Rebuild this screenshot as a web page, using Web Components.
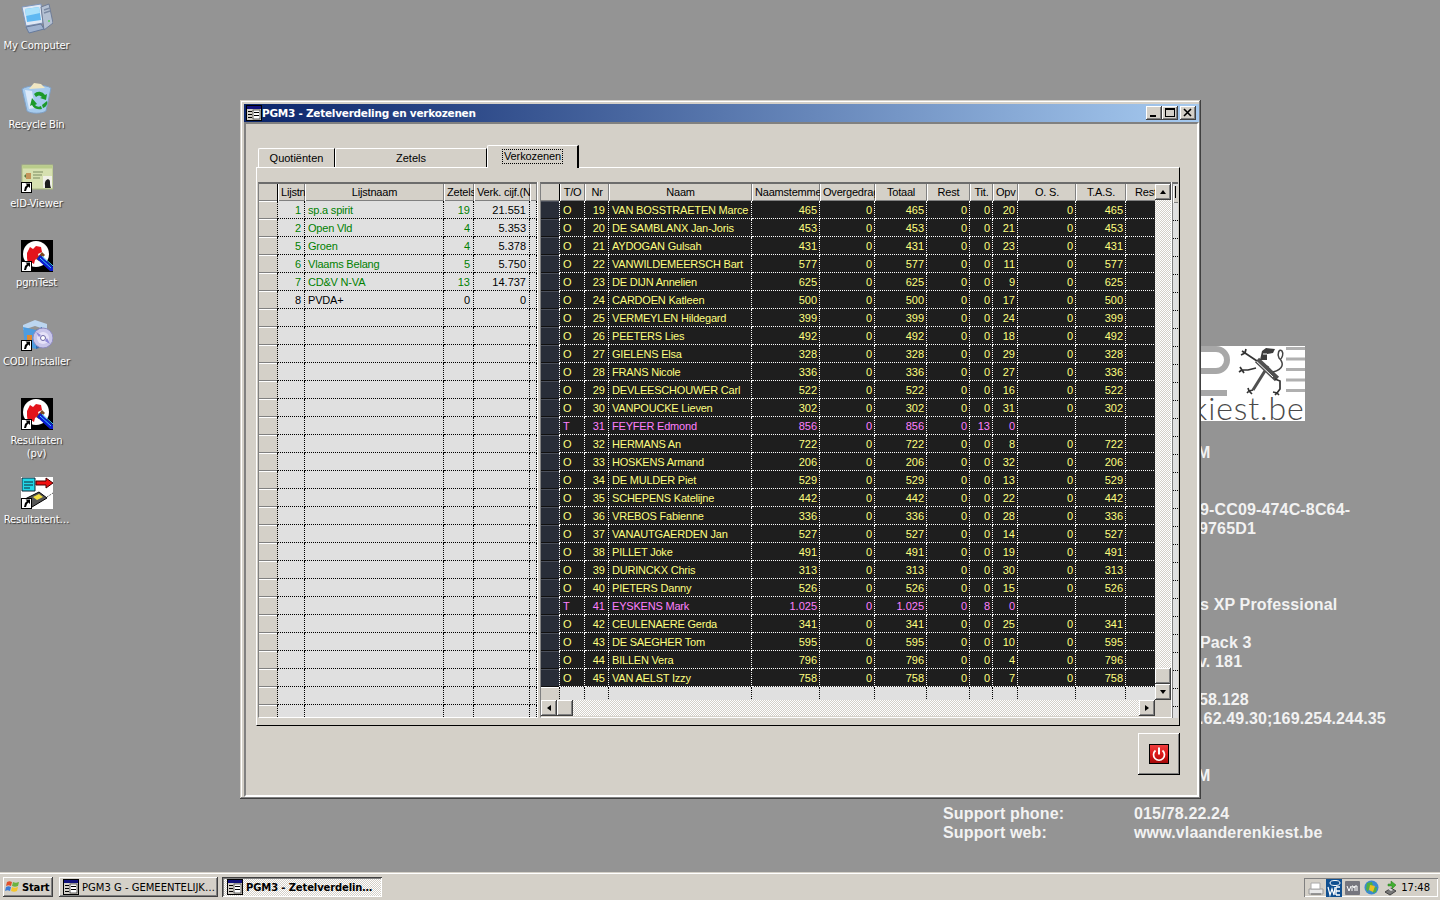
<!DOCTYPE html>
<html lang="nl"><head><meta charset="utf-8"><title>PGM3</title>
<style>
html,body{margin:0;padding:0;height:100%;overflow:hidden;background:#949494}
</style></head><body>
<win-desktop>
  <desk-icon label="My Computer" icon="computer"></desk-icon>
  <desk-icon label="Recycle Bin" icon="bin"></desk-icon>
  <desk-icon label="eID-Viewer" icon="eid" shortcut></desk-icon>
  <desk-icon label="pgmTest" icon="pgm" shortcut></desk-icon>
  <desk-icon label="CODI Installer" icon="cd" shortcut></desk-icon>
  <desk-icon label="Resultaten (pv)" icon="pgm" shortcut></desk-icon>
  <desk-icon label="Resultatent…" icon="tool" shortcut></desk-icon>
  <info-panel slot="info"></info-panel>
  <app-window slot="window" title="PGM3 - Zetelverdeling en verkozenen"></app-window>
  <task-bar slot="bar"></task-bar>
</win-desktop>
<script>
const ICONS={
computer:`<path d="M1 4 20 1l2 19-17 3z" fill="#dfe8f5" stroke="#7f95ba"/><path d="M4 6l14-2 2 13-14 2z" fill="#5fb8f2"/><path d="M4 6l14-2 1 6L5 13z" fill="#a9e0fb"/><path d="M20 4l8-3 4 19-9 7z" fill="#b4c0d2" stroke="#6f7c96"/><path d="M23 7l6-2M23 10l6-2" stroke="#7b8aa3" stroke-width="1.500"/><circle cx="28" cy="18" r="1" fill="#5ad05a"/><path d="M5 24l15-3 3 5-15 4z" fill="#9fb2cf" stroke="#667a9c"/>`,
bin:`<path d="M1 7c5-4 24-5 29-1l-5 23c-4 3-15 3-19 0z" fill="#a6cbee" stroke="#7f9fc4"/><path d="M8 7l5-6 7 1 4 4z" fill="#f0e6c2"/><path d="M4 8l7 1 3 17-6 1z" fill="#e8f0fb" opacity=".8"/><path d="M13 12a7 7 0 0 1 11 1l2-1-1 6-6-2 2-1c-2-2-4-2-6 0zM11 16l5 6-2 1c2 2 4 2 6 1l1 3c-4 1-8 0-10-4l-2 1z" fill="#1c9a2a"/><path d="M26 19c1 3-1 6-4 7l-1-3 5-4z" fill="#1c9a2a"/>`,
eid:`<g transform="translate(0 4)"><rect x="1" y="0" width="31" height="24" fill="#d6e0b0" stroke="#a8b880"/><rect x="1.500" y=".5" width="30" height="3" fill="#b9cc8a"/><path d="M3 11l2-2v4z" fill="#5a7a40"/><rect x="5" y="8" width="5" height="6" fill="#c4955a"/><path d="M12 7h10M12 10h9M12 13h7" stroke="#7b8a60"/><rect x="22" y="11" width="9" height="12" fill="#f0f0e8"/><path d="M24 23v-3c-1-6 5-8 5-3 0 3 0 3 1 6z" fill="#1c1c1c"/></g>`,
pgm:`<rect width="32" height="32" fill="#000"/><circle cx="15" cy="14" r="13" fill="#fff"/><path d="M6 13l3-6 3 2 3-3 5 1 1 5-4 2 1 3-4 3-1 4-3-2-3 2-1-6z" fill="#e3141c"/><path d="M15 19l6-7 3 3-6 6z" fill="#7a4a20"/><path d="M19 15l13 12v4h-3L16 19z" fill="#0a1bd0"/><path d="M21 16l11 10M19 18l11 10" stroke="#39c8ff"/>`,
cd:`<path d="M2 6 14 1l12 4v6L14 7 2 11z" fill="#bcd6f0"/><path d="M2 8l13 3v19L4 27z" fill="#4d9ce0"/><path d="M15 11l6-3v20l-6 2z" fill="#2e6ab0"/><rect x="6" y="16" width="5" height="5" fill="#e08a30"/><rect x="6" y="21" width="5" height="4" fill="#3aa040"/><circle cx="22" cy="19" r="10" fill="#c9c6ea" stroke="#8f8cc0"/><circle cx="22" cy="19" r="6" fill="#e6e2f8"/><path d="M15 13l5 3-2 2zM29 25l-5-3 2-3z" fill="#8d88d8"/><circle cx="22" cy="19" r="2.500" fill="#fff" stroke="#6d68a8"/>`,
tool:`<rect width="32" height="32" fill="#fff"/><path d="M1 1h13v13H1z" fill="#22d8e8" stroke="#123"/><path d="M3 5h9M3 8h9M3 11h6" stroke="#123"/><path d="M15 4h10V1l7 5-7 5V8H15z" fill="#f01010" stroke="#400"/><path d="M4 22l14-7 8 6-15 9z" fill="#555" stroke="#000"/><path d="M12 20l6-3 4 3-6 3z" fill="#f3e040"/><path d="M26 20l6-4" stroke="#333" stroke-dasharray="1 1"/>`};
const ARROW=`<rect x="0.5" y="21.5" width="10" height="10" fill="#fff" stroke="#000"/><path d="M3 30l1-4 2-2-1.500-1.500H9V27L7.500 25.500 6 27l-1 3z" fill="#000"/>`;
const WINICO=`<svg width="16" height="16" viewBox="0 0 16 16"><rect x=".5" y=".5" width="15" height="15" fill="#d4d0c8" stroke="#000"/><rect x="1" y="1" width="14" height="3" fill="#10107a"/><rect x="2" y="6" width="4" height="1"/><rect x="2" y="9" width="4" height="1"/><rect x="2" y="12" width="4" height="1"/><rect x="7" y="5" width="7" height="9" fill="#fff" stroke="#000" stroke-width=".6"/><rect x="8" y="7" width="5" height="1"/><rect x="8" y="10" width="5" height="1"/></svg>`;
const BEVEL=`background:#d4d0c8;box-shadow:inset -1px -1px #404040,inset 1px 1px #fff,inset -2px -2px #808080,inset 2px 2px #d4d0c8;`;
const STIP=`background:conic-gradient(#fff 25%,#d4d0c8 0 50%,#fff 0 75%,#d4d0c8 0) 0 0/2px 2px;`;

function define(name,render){
  customElements.define(name,class extends HTMLElement{
    connectedCallback(){ if(this.shadowRoot)return; this.attachShadow({mode:'open'}).innerHTML=render(this); }
  });
}
define('win-desktop',()=>`<style>
:host{display:block;position:relative;width:1440px;height:900px;overflow:hidden;background:#949494}
.icons{display:flex;flex-direction:column;width:73px;padding-top:3px}
.win{position:absolute;left:240px;top:100px}
.info{position:absolute;left:943px;top:0}
.bar{position:absolute;left:0;right:0;bottom:0}
</style><div class="icons"><slot></slot></div><div class="info"><slot name="info"></slot></div><div class="win"><slot name="window"></slot></div><div class="bar"><slot name="bar"></slot></div>`);

define('desk-icon',h=>`<style>
:host{display:flex;flex-direction:column;align-items:center;height:79px;flex:none}
svg{flex:none;display:block}
.t{margin-top:4px;font:10px/13px "DejaVu Sans",sans-serif;color:#fff;text-align:center;text-shadow:1px 1px 1px #333;width:72px;letter-spacing:-.15px}
</style><svg width="32" height="32" viewBox="0 0 32 32">${ICONS[h.getAttribute('icon')]}${h.hasAttribute('shortcut')?ARROW:''}</svg><div class="t">${h.getAttribute('label')}</div>`);

define('info-panel',()=>`<style>
:host{display:block;font:bold 16px/19px "Liberation Sans",sans-serif;color:#f2f2f2;width:497px;position:relative;padding-top:443px;letter-spacing:.15px}
.row{display:grid;grid-template-columns:191px 1fr;height:19px;white-space:nowrap}
.gap1{margin-top:19px}.gap2{margin-top:38px}.gap3{margin-top:57px}
.h{padding-left:66px}
.logo{position:absolute;left:258px;top:346px;width:104px;height:75px;background:#fff;overflow:hidden}
.logo svg{position:absolute;left:0;top:0}
.logo span{position:absolute;left:-9px;top:45px;font:300 32px/34px Lato,sans-serif;color:#4a4a4a;letter-spacing:.9px;white-space:nowrap}
</style>
<div class="logo"><svg width="104" height="75" viewBox="0 0 104 75">
<path d="M-4 3H15a11 11 0 0 1 0 22H-4" fill="none" stroke="#a8a8a8" stroke-width="6"/><rect x="-2" y="44" width="28" height="6" fill="#a8a8a8"/>
<path d="M85 2.500h19M85 13h19M85 23.500h19M85 34h19M85 44.500h19" stroke="#b0b0b0" stroke-width="3"/>
<path d="M56 14 76 33" stroke="#505050" stroke-width="6"/>
<path d="M67 20 52 44" stroke="#505050" stroke-width="3"/>
<path d="M52 12 72 31" stroke="#fff" stroke-width="1"/>
<path d="M59 14l2-9 4-3 9 1-2 4-6 1v6z" fill="#3c3c3c"/><path d="M62 8l4 0" stroke="#fff"/>
<path d="M56 15 44 7m0 0-3-2m3 2 1-4m-1 4-4 2M55 22l-8 2h-6m0 0-2-3m2 3-3 2m3-2 2 3M52 44l-4 1m0 0-1-3m1 3-2 2m2-2 3 3M74 33l5 2v8l-3 4m0 0-4-1m4 1-2 2m2-2 2 2" fill="none" stroke="#333" stroke-width="1.700"/>
<path d="M72 26c11-3 11-9 6-14-2-4 0-10 3-7 2 3 0 7-2 9" fill="none" stroke="#444" stroke-width="1.500"/></svg><span>kiest.be</span></div>
<div class="row"><span></span><span class="h" style="padding-left:63px">M</span></div>
<div class="row gap2"><span></span><span class="h">9-CC09-474C-8C64-</span></div>
<div class="row"><span></span><span class="h" style="padding-left:65px">9765D1</span></div>
<div class="row gap3"><span></span><span class="h">s XP Professional</span></div>
<div class="row gap1"><span></span><span class="h">Pack 3</span></div>
<div class="row"><span></span><span class="h" style="padding-left:64px">v. 181</span></div>
<div class="row gap1"><span></span><span class="h" style="padding-left:65px">58.128</span></div>
<div class="row"><span></span><span class="h" style="padding-left:65px">.62.49.30;169.254.244.35</span></div>
<div class="row gap2"><span></span><span class="h" style="padding-left:63px">M</span></div>
<div class="row gap1"><span>Support phone:</span><span>015/78.22.24</span></div>
<div class="row"><span>Support web:</span><span>www.vlaanderenkiest.be</span></div>`);

define('app-window',h=>`<style>
:host{display:block;width:961px;height:699px;box-sizing:border-box;padding:4px 2px 2px 4px;background:#d4d0c8;box-shadow:inset -1px -1px #404040,inset 1px 1px #d4d0c8,inset -2px -2px #808080,inset 2px 2px #fff}
.title{height:18px;display:flex;align-items:center;background:linear-gradient(90deg,#0a246a,#a6caf0);color:#fff;font:bold 10.5px/18px "DejaVu Sans",sans-serif;padding-left:2px;letter-spacing:-.25px}
.title svg{flex:none}.title b{flex:1;font-weight:bold;padding-left:0}
.bs{display:flex;margin-right:3px}
.b{width:16px;height:14px;${BEVEL}display:flex;align-items:center;justify-content:center}
.b.c{margin-left:2px}
.client{box-sizing:border-box;height:675px;border:2px solid;border-color:#808080 #fff #fff #808080;padding:21px 17px 0 10px;display:flex;flex-direction:column;font:11px "Liberation Sans",sans-serif;color:#000}
.foot{display:flex;justify-content:flex-end;margin-top:7px}
</style>
<div class="title">${WINICO}<b>${h.getAttribute('title')}</b><div class="bs">
<div class="b"><svg width="10" height="10"><rect x="1" y="7" width="6" height="2"/></svg></div>
<div class="b"><svg width="10" height="10"><rect x=".5" y=".5" width="9" height="8" fill="none" stroke="#000"/><rect y="0" x="0" width="10" height="2"/></svg></div>
<div class="b c"><svg width="10" height="10"><path d="M1 1l7 7M8 1L1 8" stroke="#000" stroke-width="1.600"/></svg></div></div></div>
<div class="client"><tab-strip></tab-strip><grid-panel></grid-panel><div class="foot"><power-button></power-button></div></div>`);

define('tab-strip',()=>`<style>
:host{display:flex;align-items:flex-end;height:22px;padding-left:2px;position:relative;z-index:2;flex:none;font:11px/20px "Liberation Sans",sans-serif}
.t{box-sizing:border-box;height:19px;text-align:center;border-top:1px solid #fff;border-left:1px solid #fff;border-right:1px solid #000;border-top-left-radius:2px;line-height:19px}
.a{height:23px;margin-bottom:-1px;background:#d4d0c8;padding-top:3px;line-height:15px;border-right-width:2px}
.a span{display:inline-block;outline:1px dotted #000;outline-offset:0;padding:0 1px;height:13px;line-height:13px;letter-spacing:-.1px}
</style>
<div class="t" style="width:77px">Quotiënten</div><div class="t" style="width:152px">Zetels</div><div class="t a" style="width:92px;"><span>Verkozenen</span></div>`);

const L=[["1","sp.a spirit","19","21.551",1],["2","Open Vld","4","5.353",1],["5","Groen","4","5.378",1],["6","Vlaams Belang","5","5.750",1],["7","CD&amp;V N-VA","13","14.737",1],["8","PVDA+","0","0",0]];
const C=`19|VAN BOSSTRAETEN Marce|465|20
20|DE SAMBLANX Jan-Joris|453|21
21|AYDOGAN Gulsah|431|23
22|VANWILDEMEERSCH Bart|577|11
23|DE DIJN Annelien|625|9
24|CARDOEN Katleen|500|17
25|VERMEYLEN Hildegard|399|24
26|PEETERS Lies|492|18
27|GIELENS Elsa|328|29
28|FRANS Nicole|336|27
29|DEVLEESCHOUWER Carl|522|16
30|VANPOUCKE Lieven|302|31
31|FEYFER Edmond|856|T13
32|HERMANS An|722|8
33|HOSKENS Armand|206|32
34|DE MULDER Piet|529|13
35|SCHEPENS Katelijne|442|22
36|VREBOS Fabienne|336|28
37|VANAUTGAERDEN Jan|527|14
38|PILLET Joke|491|19
39|DURINCKX Chris|313|30
40|PIETERS Danny|526|15
41|EYSKENS Mark|1.025|T8
42|CEULENAERE Gerda|341|25
43|DE SAEGHER Tom|595|10
44|BILLEN Vera|796|4
45|VAN AELST Izzy|758|7`.split('\n').map(s=>s.split('|'));

function head(cols){return cols.map(c=>`<div class="h">${c}</div>`).join('')}
define('grid-panel',()=>{
 const lw=[19,27,139,30,56,7], rw=[19,25,24,143,68,55,52,43,23,25,58,50,40];
 let left=`<div class="h ind"></div>`+head(['Lijstnr','Lijstnaam','Zetels','Verk. cijf.(N','']);
 for(let i=0;i<29;i++){const r=L[i];const g=r&&r[4]?' g':'';
   left+=`<div class="ind"></div><div class="c r n${g}">${r?r[0]:''}</div><div class="c t${g}">${r?r[1]:''}</div><div class="c r n${g}">${r?r[2]:''}</div><div class="c r n">${r?r[3]:''}</div><div class="c"></div>`;}
 let right=`<div class="h ind"></div>`+head(['T/O','Nr','Naam','Naamstemmen','Overgedragen','Totaal','Rest','Tit.','Opv','O. S.','T.A.S.','Rest']);
 for(const r of C){const t=r[3][0]=='T';const k=t?' m':'';
   right+=`<div class="ind"></div><div class="c${k}" style="padding-left:3px">${t?'T':'O'}</div><div class="c r n${k}">${r[0]}</div><div class="c t${k}">${r[1]}</div><div class="c r${k}">${r[2]}</div><div class="c r${k}">0</div><div class="c r${k}">${r[2]}</div><div class="c r${k}">0</div><div class="c r${k}">${t?r[3].slice(1):0}</div><div class="c r${k}">${t?0:r[3]}</div><div class="c r${k}">${t?'':0}</div><div class="c r${k}">${t?'':r[2]}</div><div class="c"></div>`;}
 right+=`<div class="ind lt"></div>`+Array(12).fill('<div class="c lc"></div>').join('');
 const tri=d=>`<svg width="8" height="8" viewBox="0 0 8 8"><path d="${d}"/></svg>`;
 return `<style>
:host{display:flex;box-sizing:border-box;height:559px;border:solid;border-width:1px;border-color:#fff #000 #000 #fff;padding:14px 0 0 1px;flex:none;font:11px "Liberation Sans",sans-serif}
.pane{box-sizing:border-box;height:536px;border-top:2px solid #6c6c6c;border-left:1px solid #808080;border-bottom:1px solid #fff;overflow:hidden;flex:none}
.grid{display:grid;background:#e0e0e0;overflow:hidden}
.h{box-sizing:border-box;height:17px;background:#d4d0c8;box-shadow:inset 1px 0 #fff,inset -1px -1px #808080;text-align:center;line-height:16px;overflow:hidden;white-space:nowrap;color:#000;padding:0 3px;letter-spacing:-.2px}
.h.ind{box-shadow:inset -1px 0 #000,inset 0 -1px #808080;background:#d4d0c8;padding:0}
.c{box-sizing:border-box;height:18px;line-height:18px;border-right:1px dotted #000;border-bottom:1px dotted #000;padding:0 0 0 3px;white-space:nowrap;overflow:hidden;color:#000}
.t{letter-spacing:-.2px}
.r{text-align:right;padding:0 2px 0 0}
.n{padding:0 3px 0 0}
.g{color:#008000}
.ind{box-sizing:border-box;height:18px;background:#d4d0c8;box-shadow:inset 0 1px #fff,inset 0 -1px #808080;border-right:1px dotted #000}
.h.ind{height:17px;border:0}
.dark{background:#1e1e1e}
.dark .c{color:#ffff80;border-color:#fff}
.dark .ind:not(.h){background:#282d38;box-shadow:inset 0 1px #4a4f5a,inset 0 -1px #101010;border-color:#fff}
.dark .m{color:#ff80ff}
.dark .lc{background:#e0e0e0;border-color:#000;color:#000}
.dark .ind.lt{background:#d4d0c8;box-shadow:inset 0 1px #fff;border-color:#000}
.rp{display:grid;grid-template-columns:614px 16px;grid-template-rows:516px 16px;width:631px}
.sp{width:3px;flex:none;box-sizing:border-box;border-left:1px solid #fff;height:536px}
.clip{overflow:hidden;background:#e0e0e0}
.v{display:flex;flex-direction:column;${STIP}}
.v .tr,.hs .tr{flex:1;${STIP}}
.btn{width:16px;height:16px;${BEVEL}display:flex;align-items:center;justify-content:center;flex:none}
.hs{display:flex;${STIP}}
.corner{background:#d4d0c8}
.third{width:6px;flex:none;height:536px;box-sizing:border-box;border-left:1px solid #808080;border-top:2px solid #6c6c6c;background:#e0e0e0;position:relative;overflow:hidden}
.third i{display:block;height:17px;background:#d4d0c8;border-left:1px solid #fff;box-sizing:border-box;box-shadow:inset 0 -1px #808080;padding-left:1px}
.third i::after{content:"";display:block;width:1px;height:12px;margin:2px 0 0 0;background:#000}
.third u{display:block;height:18px;border-bottom:1px dotted #000;box-sizing:border-box}
</style>
<div class="pane" style="width:279px"><div class="grid" style="grid-template-columns:${lw.map(x=>x+'px').join(' ')}">${left}</div></div>
<div class="sp"></div>
<div class="pane rp">
 <div class="clip"><div class="grid dark" style="width:${rw.reduce((a,b)=>a+b)}px;grid-template-columns:${rw.map(x=>x+'px').join(' ')}">${right}</div></div>
 <div class="v"><div class="btn">${tri('M4 2 7 6H1z')}</div><div class="tr"></div><div class="btn"></div><div class="btn">${tri('M4 6 1 2h6z')}</div></div>
 <div class="hs"><div class="btn">${tri('M2 4 6 1v6z')}</div><div class="btn"></div><div class="tr"></div><div class="btn">${tri('M6 4 2 1v6z')}</div></div>
 <div class="corner"></div>
</div>
<div class="sp" style="width:1px"></div>
<div class="third"><i></i>${'<u></u>'.repeat(29)}</div>`;
});

define('power-button',()=>`<style>
:host{display:flex;align-items:center;justify-content:center;width:42px;height:42px;box-sizing:border-box;background:#d4d0c8;box-shadow:inset -1px -1px #000,inset 1px 1px #fff,inset -2px -2px #808080}
</style><svg width="20" height="20" viewBox="0 0 20 20"><defs><linearGradient id="r" x1="0" y1="0" x2="0" y2="1"><stop offset="0" stop-color="#f04040"/><stop offset=".55" stop-color="#d81818"/><stop offset="1" stop-color="#a00808"/></linearGradient></defs><rect x=".5" y=".5" width="19" height="19" fill="url(#r)" stroke="#000"/><path d="M6.500 6.500a5.500 5.500 0 1 0 7 0" fill="none" stroke="#fff" stroke-width="1.700"/><path d="M10 3.500v7" stroke="#fff" stroke-width="2"/></svg>`);

define('task-bar',()=>`<style>
:host{display:flex;box-sizing:border-box;height:28px;background:#d4d0c8;border-top:1px solid #d4d0c8;box-shadow:inset 0 1px #fff;padding:4px 2px 3px 3px;align-items:stretch;font:10px "DejaVu Sans",sans-serif;color:#000}
.b{${BEVEL}display:flex;align-items:center;box-sizing:border-box;white-space:nowrap;overflow:hidden}
.start{width:50px;padding-left:2px;gap:1px;font-weight:bold;font-size:10px;letter-spacing:-.2px;margin-right:6px}
.w{width:159px;padding-left:4px;gap:3px;margin-right:4px}
.on{${STIP}box-shadow:inset 1px 1px #404040,inset -1px -1px #fff,inset 2px 2px #808080;font-weight:bold;padding-left:5px;width:160px;letter-spacing:-.12px}
.sp{flex:1}
.tray{width:134px;display:flex;align-items:center;box-sizing:border-box;box-shadow:inset 1px 1px #808080,inset -1px -1px #fff;padding-left:4px;margin-top:1px}
.tray svg{flex:none;margin-right:2px}
.tm{margin-left:auto;padding-right:8px;font-size:10px}
</style>
<div class="b start"><svg width="16" height="16" viewBox="0 0 16 16"><path d="M2 3c2-1 3-1 5 0L6 7C4 6 3 6 1 7z" fill="#e0502a"/><path d="M8 3c2 1 3 1 6 0l-1 4c-2 1-4 1-6 0z" fill="#6cb33f"/><path d="M1 8c2-1 3-1 5 0l-1 4c-2-1-3-1-5 0z" fill="#3a7bd5"/><path d="M7 8c2 1 3 1 6 0l-1 4c-2 1-4 1-6 0z" fill="#f5c52c"/></svg>Start</div>
<div class="b w">${WINICO}<span>PGM3 G - GEMEENTELIJK…</span></div>
<div class="b w on">${WINICO}<span>PGM3 - Zetelverdelin…</span></div>
<div class="sp"></div>
<div class="tray">
<svg width="16" height="16" viewBox="0 0 16 16"><path d="M1 9h14v5H1z" fill="#e8e8e8" stroke="#9a9a9a"/><path d="M3 3h9v6H3z" fill="#fff" stroke="#aaa"/><path d="M3 14h10" stroke="#666"/></svg>
<svg width="16" height="18" viewBox="0 0 16 18"><rect width="16" height="18" fill="#0f4f90"/><ellipse cx="9" cy="4" rx="5" ry="2.500" fill="none" stroke="#fff"/><path d="M2 8l2 8 2-6 2 6 1-8" fill="none" stroke="#fff" stroke-width="1.200"/><path d="M10 8h4M10 12h4M10 16h4M10 8v8" stroke="#fff" stroke-width="1.400"/></svg>
<svg width="15" height="14" viewBox="0 0 15 14" style="margin:0 4px 0 1px"><rect width="15" height="14" rx="1" fill="#76767e"/><path d="M2 5l2 5 2-5M7 10V5h1l1 2 1-2h1l1 0v5M10 5v5" fill="none" stroke="#fff"/></svg>
<svg width="15" height="15" viewBox="0 0 15 15" style="margin-right:3px"><circle cx="7.500" cy="7.500" r="7" fill="#3a8ad0"/><path d="M3 3l5-1 1 4-4 2-1 4-2-3zM9 8l4-1-1 5-3 1z" fill="#4fb040"/><path d="M6 5l5 1-2 6-4-2z" fill="#e8c020"/></svg>
<svg width="16" height="16" viewBox="0 0 16 16"><path d="M3 12l6-4 5 3-6 4z" fill="#777" stroke="#444"/><path d="M6 9l2-1 3 2-2 1z" fill="#ddd"/><path d="M6 4h3V1l5 4-4 4V6H6z" fill="#40b030" stroke="#2a7a20" stroke-width=".5"/></svg>
<span class="tm">17:48</span></div>`);
</script>
</body></html>
